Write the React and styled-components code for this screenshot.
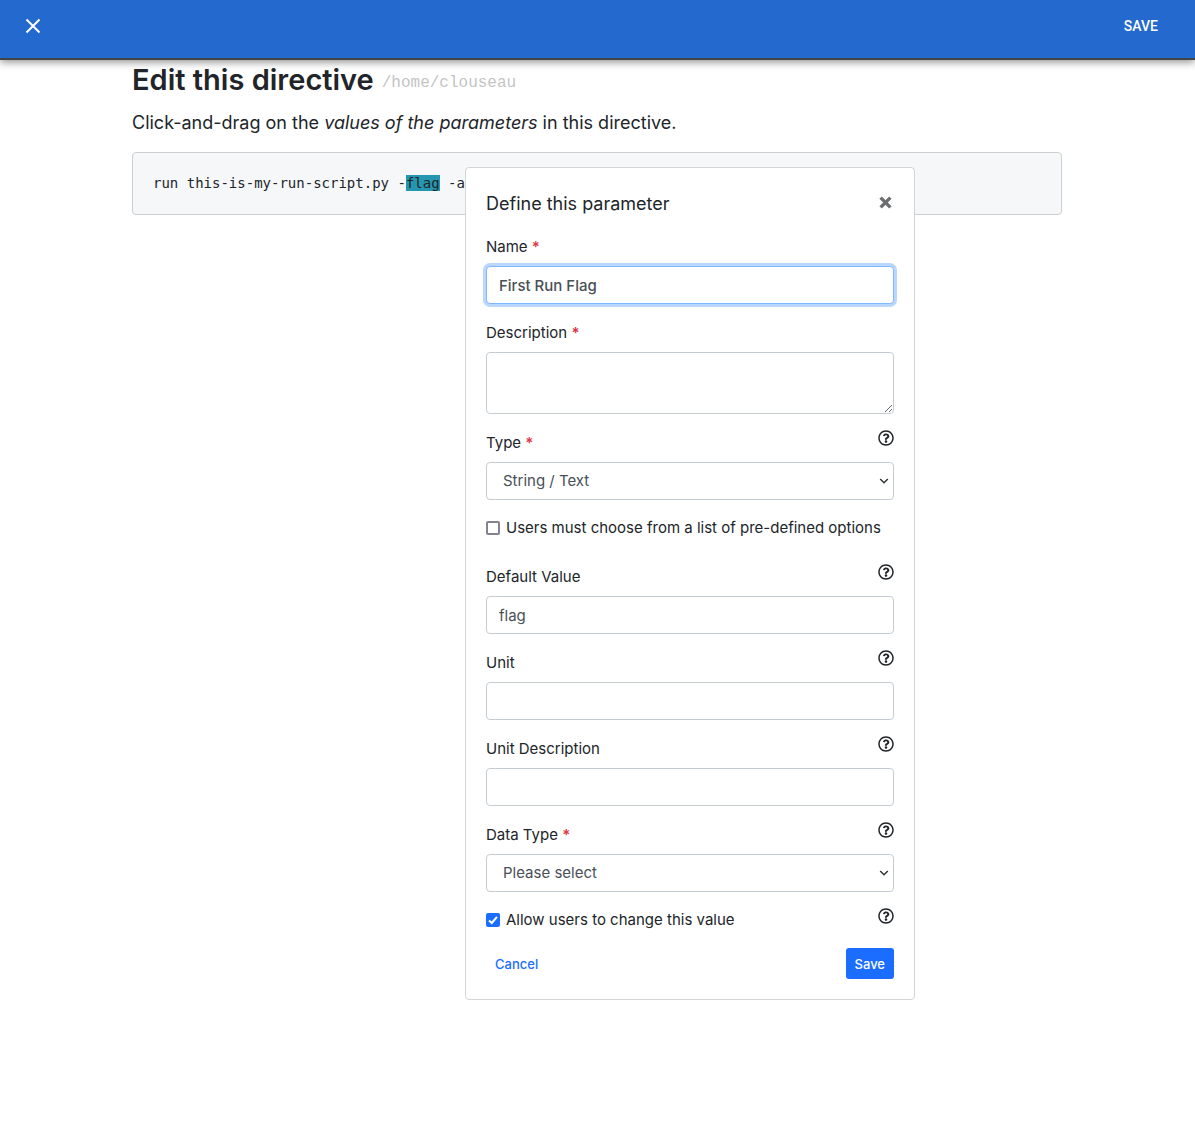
import React from "react";
import styled, { createGlobalStyle } from "styled-components";
import { FaRegQuestionCircle } from "react-icons/fa";

const GlobalStyle = createGlobalStyle`
  *, *::before, *::after { box-sizing: border-box; }
  body {
    margin: 0;
    background: #fff;
    color: #212529;
    font-family: Inter, "Liberation Sans", sans-serif;
    font-size: 15px;
    line-height: 24px;
  }
  input, select, textarea, button { font: inherit; margin: 0; }
`;

const Page = styled.div`
  min-height: 100vh;
`;

const AppBar = styled.header`
  display: flex;
  align-items: flex-start;
  justify-content: space-between;
  height: 60px;
  padding: 10px 24px;
  background: #2469cd;
  border-bottom: 2px solid #424448;
  box-shadow: 0 2px 8px rgba(0, 0, 0, 0.45);
  color: #fff;
`;

const BarIconButton = styled.button`
  display: flex;
  align-items: center;
  height: 32px;
  padding: 0;
  border: 0;
  background: none;
  color: inherit;
  cursor: pointer;
`;

const BarTextButton = styled.button`
  height: 32px;
  padding: 0 13px;
  border: 0;
  background: none;
  color: inherit;
  font-family: Roboto, sans-serif;
  font-size: 14px;
  font-weight: 500;
  cursor: pointer;
`;

const Container = styled.main`
  max-width: 961px;
  margin: 0 auto;
  padding: 0 16px 0 15px;
`;

const Heading = styled.h1`
  display: flex;
  align-items: center;
  gap: 8px;
  margin: 0 0 8px;
  font-size: 29px;
  font-weight: 600;
  line-height: 40px;
`;

const Path = styled.small`
  padding-top: 6px;
  color: #c4c4c4;
  font-family: "Liberation Mono", monospace;
  font-size: 16px;
  font-weight: 400;
  line-height: 24px;
`;

const Lead = styled.p`
  margin: 0 0 14px;
  font-size: 18px;
  line-height: 30px;
`;

const Directive = styled.div`
  position: relative;
  padding: 20px;
  border: 1px solid #ccced0;
  border-radius: 4px;
  background: #f6f7f9;
`;

const Code = styled.pre`
  margin: 0;
  font-family: "DejaVu Sans Mono", monospace;
  font-size: 14px;
  line-height: 21px;
`;

const Selected = styled.mark`
  background: #2596b0;
  color: inherit;
`;

const Popover = styled.form`
  position: absolute;
  top: 14px;
  left: 332px;
  width: 450px;
  padding: 20px;
  border: 1px solid #d4d5d6;
  border-radius: 4px;
  background: #fff;
`;

const PopoverHeader = styled.div`
  display: flex;
  align-items: center;
  justify-content: space-between;
  margin-bottom: 14px;
`;

const PopoverTitle = styled.h2`
  margin: 0;
  font-size: 18px;
  font-weight: 400;
  line-height: 32px;
`;

const CloseButton = styled.button`
  display: flex;
  padding: 0 2px 4px;
  border: 0;
  background: none;
  color: #6d6e70;
  cursor: pointer;
`;

const Group = styled.div`
  margin-bottom: ${(p) => (p.$loose ? 24 : 16)}px;
`;

const LabelRow = styled.div`
  display: flex;
  align-items: flex-start;
  justify-content: space-between;
`;

const FieldLabel = styled.label`
  margin-bottom: 6px;
  line-height: 26px;
`;

const Required = styled.span`
  color: #dc3545;
  font-weight: 600;
`;

const HelpButton = styled.button`
  display: flex;
  padding: 0;
  border: 0;
  background: none;
  color: #212529;
  cursor: pointer;
`;

const control = `
  display: block;
  width: 100%;
  border: 1px solid #c5cbd3;
  border-radius: 4px;
  padding: 6px 12px;
  background: #fff;
  color: #495057;
  &:focus {
    outline: 0;
    border-color: #80b8ff;
    box-shadow: 0 0 0 3px #b9d7ff;
  }
`;

const TextInput = styled.input`
  ${control}
  height: 38px;
  font-weight: ${(p) => (p.$strong ? 500 : 400)};
`;

const TextArea = styled.textarea`
  ${control}
  height: 62px;
  resize: vertical;
`;

const SelectBox = styled.div`
  display: grid;
  align-items: center;
  > * { grid-area: 1 / 1; }
  svg {
    justify-self: end;
    margin-right: 5px;
    color: #32373c;
    pointer-events: none;
  }
`;

const SelectInput = styled.select`
  ${control}
  appearance: none;
  height: 38px;
  padding: 6px 16px;
`;

const CheckLabel = styled.label`
  display: flex;
  align-items: center;
  gap: 6px;
`;

const CheckBox = styled.span`
  display: grid;
  > * { grid-area: 1 / 1; }
  svg { display: none; pointer-events: none; }
  input:checked + svg { display: block; }
`;

const CheckInput = styled.input`
  appearance: none;
  width: 14px;
  height: 14px;
  border: 2px solid #85828f;
  border-radius: 2px;
  background: #fff;
  &:checked {
    border-color: #1a6dff;
    background: #1a6dff;
  }
`;

const Footer = styled.div`
  display: flex;
  justify-content: space-between;
`;

const Button = styled.button`
  height: 31px;
  padding: 0 9px;
  border: 0;
  border-radius: 3px;
  background: ${(p) => (p.$primary ? "#1a6dff" : "none")};
  color: ${(p) => (p.$primary ? "#fff" : "#1a6dff")};
  font-size: 13px;
  font-weight: 500;
  cursor: pointer;
`;

function Help({ topic }) {
  return (
    <HelpButton type="button" aria-label={`Help: ${topic}`}>
      <FaRegQuestionCircle size={16} />
    </HelpButton>
  );
}

function Field({ id, label, required, help, children }) {
  return (
    <Group>
      <LabelRow>
        <FieldLabel htmlFor={id}>
          {label} {required && <Required>*</Required>}
        </FieldLabel>
        {help && <Help topic={label} />}
      </LabelRow>
      {children}
    </Group>
  );
}

function Select({ id, children }) {
  return (
    <SelectBox>
      <SelectInput id={id}>{children}</SelectInput>
      <svg width="10" height="8" viewBox="0 0 10 8" fill="none" stroke="currentColor" strokeWidth="1.5">
        <path d="M1.2 2 5 5.8 8.8 2" />
      </svg>
    </SelectBox>
  );
}

function Check({ label, checked }) {
  return (
    <CheckLabel>
      <CheckBox>
        <CheckInput type="checkbox" defaultChecked={checked} />
        <svg width="14" height="14" viewBox="0 0 14 14" fill="none" stroke="#fff" strokeWidth="2">
          <path d="M3 7.4 5.8 10 11 3.8" />
        </svg>
      </CheckBox>
      {label}
    </CheckLabel>
  );
}

export default function App() {
  return (
    <Page>
      <GlobalStyle />
      <AppBar>
        <BarIconButton type="button" aria-label="Close">
          <svg width="18" height="18" viewBox="0 0 18 18" fill="none" stroke="currentColor" strokeWidth="2">
            <path d="M2.5 2.5 15.5 15.5M15.5 2.5 2.5 15.5" />
          </svg>
        </BarIconButton>
        <BarTextButton type="button">SAVE</BarTextButton>
      </AppBar>
      <Container>
        <Heading>
          Edit this directive <Path>/home/clouseau</Path>
        </Heading>
        <Lead>
          Click-and-drag on the <em>values of the parameters</em> in this directive.
        </Lead>
        <Directive>
          <Code>
            run this-is-my-run-script.py -<Selected>flag</Selected> -a
          </Code>
          <Popover onSubmit={(e) => e.preventDefault()}>
            <PopoverHeader>
              <PopoverTitle>Define this parameter</PopoverTitle>
              <CloseButton type="button" aria-label="Close">
                <svg width="13" height="13" viewBox="0 0 13 13" fill="none" stroke="currentColor" strokeWidth="3.4">
                  <path d="M1.6 1.6 11.4 11.4M11.4 1.6 1.6 11.4" />
                </svg>
              </CloseButton>
            </PopoverHeader>
            <Field id="name" label="Name" required>
              <TextInput id="name" $strong autoFocus defaultValue="First Run Flag" />
            </Field>
            <Field id="description" label="Description" required>
              <TextArea id="description" />
            </Field>
            <Field id="type" label="Type" required help>
              <Select id="type">
                <option>String / Text</option>
              </Select>
            </Field>
            <Group $loose>
              <Check label="Users must choose from a list of pre-defined options" />
            </Group>
            <Field id="default" label="Default Value" help>
              <TextInput id="default" defaultValue="flag" />
            </Field>
            <Field id="unit" label="Unit" help>
              <TextInput id="unit" />
            </Field>
            <Field id="unit-description" label="Unit Description" help>
              <TextInput id="unit-description" />
            </Field>
            <Field id="data-type" label="Data Type" required help>
              <Select id="data-type">
                <option>Please select</option>
              </Select>
            </Field>
            <Group>
              <LabelRow>
                <Check label="Allow users to change this value" checked />
                <Help topic="Allow users to change this value" />
              </LabelRow>
            </Group>
            <Footer>
              <Button type="button">Cancel</Button>
              <Button type="submit" $primary>Save</Button>
            </Footer>
          </Popover>
        </Directive>
      </Container>
    </Page>
  );
}
